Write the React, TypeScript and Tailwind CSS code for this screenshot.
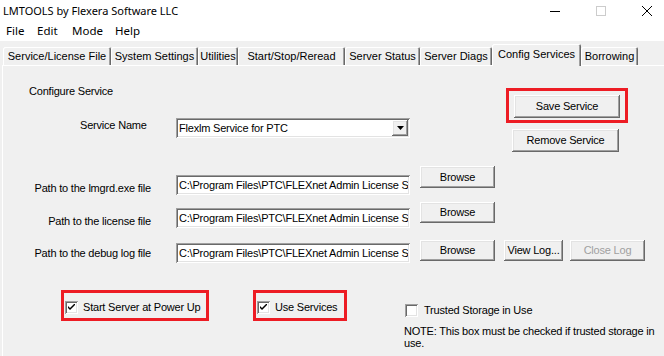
import React from "react";

const raised =
  "shadow-[inset_-1px_-1px_#696969,inset_1px_1px_#ffffff,inset_-2px_-2px_#a0a0a0,inset_2px_2px_#e3e3e3]";
const sunken =
  "shadow-[inset_1px_1px_#a0a0a0,inset_-1px_-1px_#ffffff,inset_2px_2px_#696969,inset_-2px_-2px_#e3e3e3]";

function Btn({
  className,
  children,
  disabled,
}: {
  className: string;
  children: React.ReactNode;
  disabled?: boolean;
}) {
  return (
    <div
      className={`${className} ${raised} flex shrink-0 items-center justify-center bg-[#f0f0f0] leading-[13px] ${
        disabled ? "text-[#a0a0a0]" : "text-black"
      }`}
    >
      {children}
    </div>
  );
}

function Check({ checked }: { checked?: boolean }) {
  return (
    <div
      className={`w-[13px] h-[13px] shrink-0 bg-white ${sunken} flex items-center justify-center`}
    >
      {checked && (
        <svg width="7" height="7" viewBox="0 0 7 7">
          <path d="M0 2 L0 4 L2 6 L7 1 L7 -1 L2 4 Z" fill="#000" />
        </svg>
      )}
    </div>
  );
}

function Field({ text }: { text: string }) {
  return (
    <div
      className={`w-[234px] h-[20px] shrink-0 bg-white ${sunken} flex items-center pl-[3px] pr-[2px] overflow-hidden whitespace-nowrap leading-[13px]`}
    >
      <span className="block overflow-hidden">{text}</span>
    </div>
  );
}

const tabs = [
  { label: "Service/License File", w: "w-[108px]" },
  { label: "System Settings", w: "w-[87px]" },
  { label: "Utilities", w: "w-[40px]" },
  { label: "Start/Stop/Reread", w: "w-[107px]" },
  { label: "Server Status", w: "w-[75px]" },
  { label: "Server Diags", w: "w-[72px]" },
  { label: "Config Services", w: "w-[89px]", active: true },
  { label: "Borrowing", w: "w-[57px]" },
];

export default function App() {
  return (
    <div className="w-[664px] h-[356px] overflow-hidden bg-[#f0f0f0] text-black font-['Liberation_Sans',Arial,sans-serif] text-[11px]">
      {/* Title bar */}
      <div className="h-[21px] bg-white flex items-center justify-between font-['Noto_Sans',sans-serif] text-[11px]">
        <div className="pl-[3px] leading-[16px]">LMTOOLS by Flexera Software LLC</div>
        <div className="flex h-full -mr-[6px]">
          <div className="w-[46px] h-full flex items-center justify-center">
            <svg width="10" height="10" viewBox="0 0 10 10">
              <line x1="0" y1="5.5" x2="10" y2="5.5" stroke="#000" strokeWidth="1" />
            </svg>
          </div>
          <div className="w-[46px] h-full flex items-center justify-center">
            <svg width="10" height="10" viewBox="0 0 10 10">
              <rect x="0.5" y="0.5" width="9" height="9" fill="none" stroke="#cccccc" strokeWidth="1" />
            </svg>
          </div>
          <div className="w-[46px] h-full flex items-center justify-center">
            <svg width="10" height="10" viewBox="0 0 10 10">
              <path d="M0 0 L10 10 M10 0 L0 10" stroke="#000" strokeWidth="1" />
            </svg>
          </div>
        </div>
      </div>

      {/* Menu bar */}
      <div className="h-[20px] bg-white flex items-center pl-[6px] font-['Noto_Sans',sans-serif] text-[11.5px] leading-[16px]">
        <div className="w-[31px]">File</div>
        <div className="w-[35px]">Edit</div>
        <div className="w-[43px]">Mode</div>
        <div>Help</div>
      </div>

      {/* Tabs */}
      <div className="h-[24px] pt-[3px] pl-[3px] flex items-end">
        {tabs.map((t) =>
          t.active ? (
            <div
              key={t.label}
              className={`${t.w} h-[22px] -mb-px relative z-10 bg-[#f0f0f0] shrink-0 flex items-start justify-center pt-[4px] leading-[13px] rounded-t-[2px] shadow-[inset_1px_1px_#ffffff,inset_-1px_0_#696969,inset_-2px_0_#a0a0a0]`}
            >
              {t.label}
            </div>
          ) : (
            <div
              key={t.label}
              className={`${t.w} h-[18px] bg-[#f0f0f0] shrink-0 flex items-start justify-center pt-[3px] leading-[13px] rounded-t-[2px] shadow-[inset_1px_1px_#ffffff,inset_-1px_0_#696969,inset_-2px_0_#a0a0a0]`}
            >
              {t.label}
            </div>
          )
        )}
      </div>

      {/* Panel */}
      <div className="ml-[2px] border-l border-t border-white h-[292px] tracking-[-0.2px]">
        {/* Section 1 */}
        <div className="h-[100px] flex">
          <div className="w-[417px] shrink-0">
            <div className="mt-[19px] ml-[26px] leading-[13px]">Configure Service</div>
            <div className="mt-[20px] flex items-start">
              <div className="ml-[77px] w-[96px] mt-[1px] leading-[13px]">Service Name</div>
              <div
                className={`w-[234px] h-[20px] bg-white ${sunken} flex items-center justify-between pl-[3px] pr-[2px]`}
              >
                <span className="leading-[13px]">Flexlm Service for PTC</span>
                <div className={`w-[16px] h-[16px] ${raised} bg-[#f0f0f0] flex items-center justify-center`}>
                  <svg width="7" height="4" viewBox="0 0 7 4">
                    <path d="M0 0 L7 0 L3.5 4 Z" fill="#000" />
                  </svg>
                </div>
              </div>
            </div>
          </div>
          <div className="flex flex-col">
            <div className="mt-[22px] ml-[86px] w-[122px] h-[35px] border-[3px] border-[#ed1c24]">
              <div className="mt-[4px] ml-[5px]">
                <Btn className="w-[106px] h-[23px]">Save Service</Btn>
              </div>
            </div>
            <div className="mt-[6px] ml-[92px]">
              <Btn className="w-[107px] h-[23px]">Remove Service</Btn>
            </div>
          </div>
        </div>

        {/* Path rows */}
        <div className="h-[36px] flex items-start">
          <div className="w-[148px] mt-[16px] text-right leading-[13px] shrink-0">Path to the lmgrd.exe file</div>
          <div className="ml-[25px] mt-[9px]">
            <Field text="C:\Program Files\PTC\FLEXnet Admin License Server" />
          </div>
          <div className="ml-[10px]">
            <Btn className="w-[75px] h-[22px]">Browse</Btn>
          </div>
        </div>
        <div className="h-[38px] flex items-start">
          <div className="w-[148px] mt-[13px] text-right leading-[13px] shrink-0">Path to the license file</div>
          <div className="ml-[25px] mt-[6px]">
            <Field text="C:\Program Files\PTC\FLEXnet Admin License Server" />
          </div>
          <div className="ml-[10px]">
            <Btn className="w-[75px] h-[21px]">Browse</Btn>
          </div>
        </div>
        <div className="h-[50px] flex items-start">
          <div className="w-[148px] mt-[7px] text-right leading-[13px] shrink-0">Path to the debug log file</div>
          <div className="ml-[25px] mt-[3px]">
            <Field text="C:\Program Files\PTC\FLEXnet Admin License Server" />
          </div>
          <div className="ml-[10px]">
            <Btn className="w-[75px] h-[21px]">Browse</Btn>
          </div>
          <div className="ml-[9px]">
            <Btn className="w-[59px] h-[21px]">View Log...</Btn>
          </div>
          <div className="ml-[7px]">
            <Btn className="w-[75px] h-[21px]" disabled>
              Close Log
            </Btn>
          </div>
        </div>

        {/* Checkboxes */}
        <div className="flex items-start">
          <div className="ml-[58px] w-[148px] h-[31px] border-[3px] border-[#ed1c24] shrink-0">
            <div className="mt-[8px] ml-[1px] flex items-center">
              <Check checked />
              <span className="ml-[5px] leading-[13px]">Start Server at Power Up</span>
            </div>
          </div>
          <div className="ml-[44px] w-[94px] h-[31px] border-[3px] border-[#ed1c24] shrink-0">
            <div className="mt-[8px] ml-[1px] flex items-center">
              <Check checked />
              <span className="ml-[5px] leading-[13px]">Use Services</span>
            </div>
          </div>
          <div className="ml-[57px] flex flex-col">
            <div className="mt-[14px] ml-[1px] flex items-center">
              <Check />
              <span className="ml-[6px] leading-[13px]">Trusted Storage in Use</span>
            </div>
            <div className="mt-[8px] w-[258px] leading-[12px]">
              NOTE: This box must be checked if trusted storage in use.
            </div>
          </div>
        </div>
      </div>
    </div>
  );
}
